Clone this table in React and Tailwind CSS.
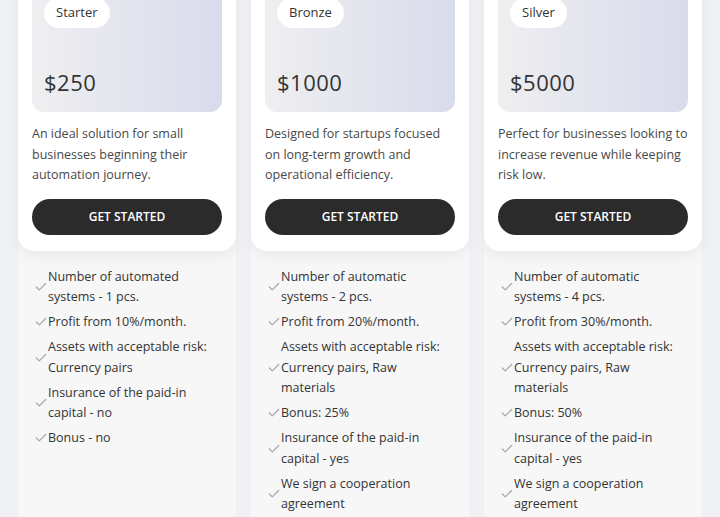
import React from 'react';

const plans = [
  {
    name: 'Starter',
    price: '$250',
    text: 'An ideal solution for small businesses beginning their automation journey.',
    features: [
      'Number of automated systems - 1 pcs.',
      'Profit from 10%/month.',
      'Assets with acceptable risk: Currency pairs',
      'Insurance of the paid-in capital - no',
      'Bonus - no',
    ],
  },
  {
    name: 'Bronze',
    price: '$1000',
    text: 'Designed for startups focused on long-term growth and operational efficiency.',
    features: [
      'Number of automatic systems - 2 pcs.',
      'Profit from 20%/month.',
      'Assets with acceptable risk: Currency pairs, Raw materials',
      'Bonus: 25%',
      'Insurance of the paid-in capital - yes',
      'We sign a cooperation agreement',
    ],
  },
  {
    name: 'Silver',
    price: '$5000',
    text: 'Perfect for businesses looking to increase revenue while keeping risk low.',
    features: [
      'Number of automatic systems - 4 pcs.',
      'Profit from 30%/month.',
      'Assets with acceptable risk: Currency pairs, Raw materials',
      'Bonus: 50%',
      'Insurance of the paid-in capital - yes',
      'We sign a cooperation agreement',
    ],
  },
];

function CheckIcon() {
  return (
    <svg width="14" height="14" viewBox="0 0 24 24" fill="none" stroke="#a3a8b3" strokeWidth="2.2" strokeLinecap="round" strokeLinejoin="round" className="shrink-0">
      <path d="M20 6 9 17l-5-5" />
    </svg>
  );
}

function PlanCard({ plan }) {
  return (
    <div className="w-[218px] bg-[#f7f7f8] min-h-[600px]">
      <div className="bg-white rounded-b-2xl px-[14px] pt-[14px] pb-4 shadow-[0_6px_14px_rgba(0,0,0,0.05)]">
        <div className="h-[128px] rounded-xl bg-linear-to-r from-[#efeff1] to-[#d8dbeb] px-3 pt-[14px] pb-4 flex flex-col justify-between items-start">
          <span className="bg-white rounded-full px-3 h-[30px] flex items-center text-[13px] text-[#333]">{plan.name}</span>
          <span className="text-[22px] leading-7 font-medium text-[#333] tracking-[0.5px]">{plan.price}</span>
        </div>
        <p className="mt-3 text-[12.5px] leading-[20.5px] text-[#484848]">{plan.text}</p>
        <button className="mt-[13px] w-full h-9 rounded-full bg-[#2b2b2b] text-white text-[12px] font-semibold">GET STARTED</button>
      </div>
      <ul className="pl-4 pr-[22px] pt-4 flex flex-col gap-[4.5px]">
        {plan.features.map((f) => (
          <li key={f} className="flex items-center text-[12.5px] leading-[20.5px] text-[#333]">
            <CheckIcon />
            <span>{f}</span>
          </li>
        ))}
      </ul>
    </div>
  );
}

export default function App() {
  return (
    <div className="w-[720px] h-[517px] overflow-hidden bg-[#eff1f4]" style={{ fontFamily: '"Open Sans", sans-serif' }}>
      <div className="-mt-[30px] flex gap-[15px] px-[18px]">
        {plans.map((p) => (
          <PlanCard key={p.name} plan={p} />
        ))}
      </div>
    </div>
  );
}
